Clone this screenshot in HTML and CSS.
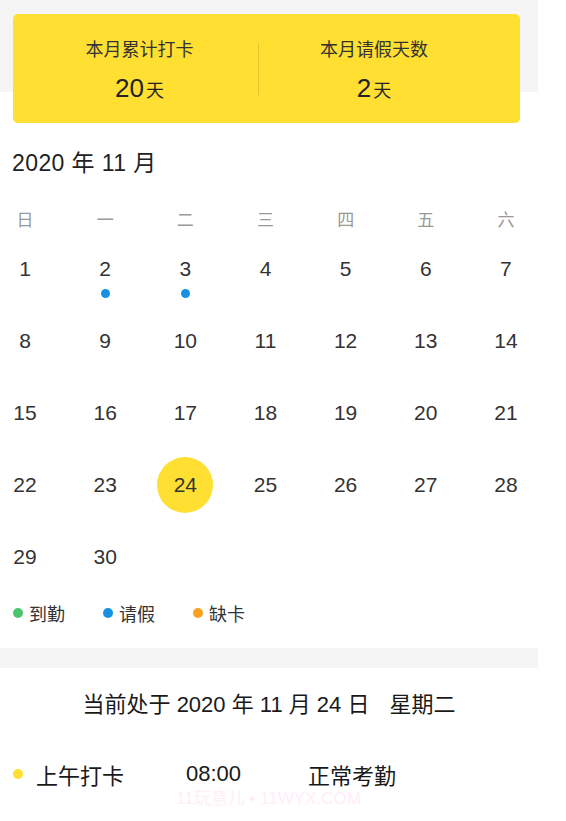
FILE: index.html
```html
<!DOCTYPE html>
<html lang="zh-CN">
<head>
  <meta charset="UTF-8">
  <title>考勤日历</title>
  <link rel="stylesheet" href="styles.css">
</head>
<body>
  <div class="page">

    <div class="top">
      <div class="summary">
        <div class="stat">
          <div class="stat-label">本月累计打卡</div>
          <div class="stat-value">20<span class="unit">天</span></div>
        </div>
        <div class="divider"></div>
        <div class="stat">
          <div class="stat-label">本月请假天数</div>
          <div class="stat-value">2<span class="unit">天</span></div>
        </div>
      </div>
    </div>

    <h2 class="month">2020 年 11 月</h2>

    <div class="calendar">
      <div class="week">
        <span>日</span><span>一</span><span>二</span><span>三</span><span>四</span><span>五</span><span>六</span>
      </div>
      <div class="days" id="days"></div>
    </div>

    <div class="legend">
      <span class="legend-item"><i class="dot green"></i>到勤</span>
      <span class="legend-item"><i class="dot blue"></i>请假</span>
      <span class="legend-item"><i class="dot orange"></i>缺卡</span>
    </div>

    <div class="gap"></div>

    <p class="today">当前处于 2020 年 11 月 24 日<span class="weekday">星期二</span></p>

    <div class="record">
      <i class="dot yellow"></i>
      <span class="record-name">上午打卡</span>
      <span class="record-time">08:00</span>
      <span class="record-state">正常考勤</span>
    </div>

  </div>

  <div class="watermark">11玩意儿 • 11WYX.COM</div>

  <script>
    const days = document.getElementById('days');
    const leave = [2, 3];
    const today = 24;

    for (let d = 1; d <= 30; d++) {
      const cell = document.createElement('div');
      cell.className = 'day';
      let html = `<span class="num${d === today ? ' current' : ''}">${d}</span>`;
      if (leave.includes(d)) {
        html += '<i class="mark"></i>';
      }
      cell.innerHTML = html;
      days.appendChild(cell);
    }
  </script>
</body>
</html>
```

FILE: styles.css
```css
* { box-sizing: border-box; }

body {
  margin: 0;
  background: #fff;
  color: #333;
  font-family: 'Liberation Sans', 'Noto Sans CJK SC', sans-serif;
}

.page {
  width: 538px;
}

.top {
  background: linear-gradient(#f5f5f5 92px, #fff 92px);
  padding: 14px 18px 0 13px;
}

.summary {
  background: #fedf32;
  border-radius: 5px;
  height: 109px;
  padding-left: 8px;
  display: grid;
  grid-template-columns: 237px 1px 230px;
  align-items: center;
}

.stat {
  text-align: center;
  padding-top: 5px;
}

.stat-label {
  font-size: 18px;
  line-height: 24px;
  color: #333;
}

.stat-value {
  margin-top: 12px;
  font-size: 26px;
  line-height: 28px;
  color: #222;
}

.unit {
  font-size: 18px;
  margin-left: 2px;
}

.divider {
  height: 52px;
  background: #e3c632;
}

.month {
  margin: 25px 0 0 12px;
  font-size: 23px;
  line-height: 30px;
  letter-spacing: 0.4px;
  font-weight: normal;
  color: #222;
}

.calendar {
  margin-left: -3px;
  width: 537px;
}

.week, .days {
  display: grid;
  grid-template-columns: repeat(7, 56px);
  justify-content: space-between;
}

.week {
  margin-top: 28px;
  height: 30px;
  line-height: 30px;
  font-size: 17px;
  color: #999;
  text-align: center;
}

.days {
  margin-top: 5px;
}

.day {
  height: 72px;
  display: flex;
  flex-direction: column;
  align-items: center;
}

.num {
  width: 56px;
  height: 56px;
  line-height: 56px;
  text-align: center;
  font-size: 21px;
  border-radius: 50%;
}

.num.current {
  background: #fedf32;
}

.mark {
  width: 9px;
  height: 9px;
  margin-top: -8px;
  border-radius: 50%;
  background: #1690e3;
}

.legend {
  display: flex;
  gap: 38px;
  padding-left: 13px;
  height: 24px;
  align-items: center;
  font-size: 18px;
  color: #333;
}

.legend-item {
  display: flex;
  align-items: center;
  gap: 6px;
}

.dot {
  display: inline-block;
  width: 10px;
  height: 10px;
  border-radius: 50%;
}

.green { background: #4cc46e; }
.blue { background: #1690e3; }
.orange { background: #f9a11c; }
.yellow { background: #fedf32; }

.gap {
  margin-top: 23px;
  height: 20px;
  background: #f5f5f5;
}

.today {
  margin: 22px 0 0;
  text-align: center;
  font-size: 22px;
  line-height: 30px;
  color: #1a1a1a;
}

.weekday {
  margin-left: 20px;
}

.record {
  margin-top: 39px;
  padding-left: 13px;
  display: flex;
  align-items: center;
  height: 30px;
  font-size: 22px;
  color: #1a1a1a;
}

.record .dot {
  margin-right: 13px;
}

.record-name {
  width: 150px;
}

.record-time {
  width: 122px;
}

.watermark {
  position: absolute;
  left: 176px;
  top: 788px;
  font-size: 17px;
  line-height: 22px;
  color: #feeef8;
}
```
